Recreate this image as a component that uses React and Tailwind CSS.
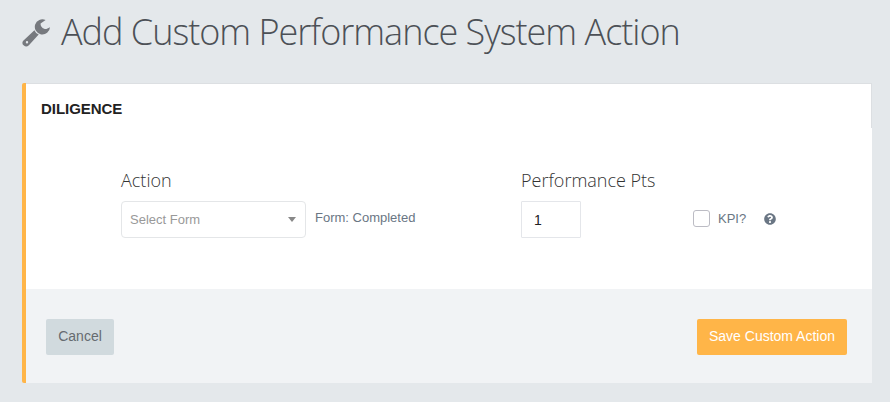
import React from 'react';
import { FaQuestionCircle } from 'react-icons/fa';

function WrenchIcon({ className }) {
  return (
    <svg viewBox="0 0 28 28" className={className} fill="currentColor">
      <path d="M23.6 1A7.6 7.6 0 1 0 28 8.3L24.4 10C21.4 10.4 18.3 8 18.6 4.6Z" />
      <path
        fillRule="evenodd"
        d="M12.4 11.2Q13.4 14 16.7 15.5L6.9 26.2Q4.4 28.6 1.9 26.6T1 22ZM5 22A1.2 1.2 0 1 0 5 24.4A1.2 1.2 0 1 0 5 22Z"
      />
    </svg>
  );
}

export default function App() {
  return (
    <div className="w-[890px] h-[402px] bg-[#e4e8eb] overflow-hidden font-['Liberation_Sans',Arial,sans-serif] text-[13px] text-[#6a7684]">
      <h1 className="flex items-center h-[83px] pb-[19px] pl-[22px] font-['Open_Sans',sans-serif] font-light text-[36px] tracking-[-1px] text-[#4c5056] whitespace-nowrap">
        <WrenchIcon className="w-[28px] h-[28px] mt-[2px] mr-[11px] text-[#76797e]" />
        Add Custom Performance System Action
      </h1>

      <div className="ml-[22px] w-[850px] h-[300px] rounded-l-[2px] border-l-4 border-[#ffb548] bg-white flex flex-col">
        <div className="h-[45px] border-t border-r border-[#dcdfe2] pl-[15px] flex items-center pt-[7px] font-bold text-[15px] tracking-[-0.05px] text-[#222]">
          DILIGENCE
        </div>

        <div className="h-[161px] pt-[40px] pl-[95px] flex">
          <div className="w-[400px]">
            <label className="block h-[33px] leading-[24px] font-['Open_Sans',sans-serif] text-[18px] font-light text-[#333]">Action</label>
            <div className="flex items-center">
              <div className="w-[185px] h-[37px] border border-[#e4e6e8] rounded-[4px] pl-[8px] pr-[9px] flex items-center justify-between text-[#999]">
                Select Form
                <span className="border-x-4 border-x-transparent border-t-[5px] border-t-[#888]" />
              </div>
              <span className="ml-[9px] mb-[4px]">Form: Completed</span>
            </div>
          </div>

          <div>
            <label className="block h-[33px] leading-[24px] font-['Open_Sans',sans-serif] text-[18px] font-light text-[#333]">Performance Pts</label>
            <div className="flex items-center">
              <input defaultValue="1" className="w-[60px] h-[37px] border border-[#e4e6ea] rounded-[1px] pl-[12px] text-[14px] text-[#222] outline-none" />
              <span className="ml-[112px] mb-[2px] w-[17px] h-[17px] border border-[#bcbcc4] rounded-[3px]" />
              <span className="ml-[8px] mb-[2px]">KPI?</span>
              <FaQuestionCircle className="ml-[18px] mb-[1px] w-[12px] h-[12px]" />
            </div>
          </div>
        </div>

        <div className="h-[94px] bg-[#f1f3f5] pt-[2px] pl-[20px] pr-[25px] flex items-center justify-between text-[14px]">
          <button className="w-[68px] h-[36px] pb-[2px] rounded-[2px] bg-[#d1dade] text-[#666b70]">Cancel</button>
          <button className="w-[150px] h-[36px] pb-[2px] rounded-[2px] bg-[#ffb548] text-white">Save Custom Action</button>
        </div>
      </div>
    </div>
  );
}
